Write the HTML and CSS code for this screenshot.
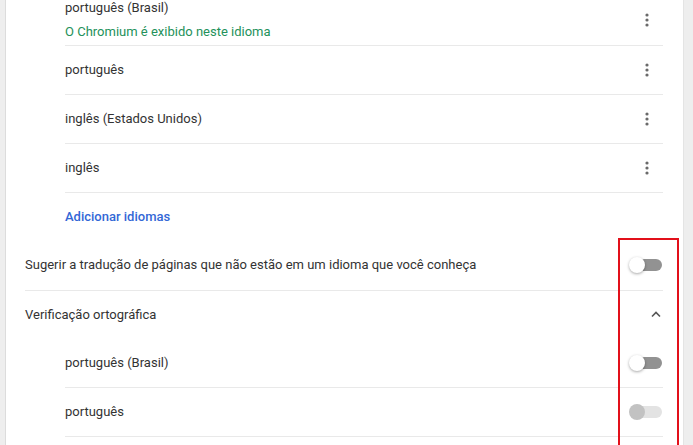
FILE: index.html
```html
<!DOCTYPE html>
<html lang="pt-BR">
<head>
<meta charset="utf-8">
<link rel="stylesheet" href="styles.css">
</head>
<body>
<div class="card">
  <div class="sublist">
    <div class="lang-row first">
      <div class="lang-text">
        <div class="lang-name">português (Brasil)</div>
        <div class="lang-note">O Chromium é exibido neste idioma</div>
      </div>
      <span class="kebab"><svg width="6" height="16" viewBox="0 0 6 16"><circle cx="3" cy="3" r="1.6"/><circle cx="3" cy="8" r="1.6"/><circle cx="3" cy="13" r="1.6"/></svg></span>
    </div>
    <div class="lang-row">
      <div class="lang-name">português</div>
      <span class="kebab"><svg width="6" height="16" viewBox="0 0 6 16"><circle cx="3" cy="3" r="1.6"/><circle cx="3" cy="8" r="1.6"/><circle cx="3" cy="13" r="1.6"/></svg></span>
    </div>
    <div class="lang-row">
      <div class="lang-name">inglês (Estados Unidos)</div>
      <span class="kebab"><svg width="6" height="16" viewBox="0 0 6 16"><circle cx="3" cy="3" r="1.6"/><circle cx="3" cy="8" r="1.6"/><circle cx="3" cy="13" r="1.6"/></svg></span>
    </div>
    <div class="lang-row">
      <div class="lang-name">inglês</div>
      <span class="kebab"><svg width="6" height="16" viewBox="0 0 6 16"><circle cx="3" cy="3" r="1.6"/><circle cx="3" cy="8" r="1.6"/><circle cx="3" cy="13" r="1.6"/></svg></span>
    </div>
    <div class="lang-row add">
      <a class="add-link">Adicionar idiomas</a>
    </div>
  </div>

  <div class="main-row">
    <div class="label">Sugerir a tradução de páginas que não estão em um idioma que você conheça</div>
    <span class="toggle"><span class="track"></span><span class="knob"></span></span>
  </div>

  <div class="main-row bordered">
    <div class="label">Verificação ortográfica</div>
    <span class="chevron"><svg width="10" height="7" viewBox="0 0 10 7"><path d="M1 5.5 L5 1.5 L9 5.5" fill="none" stroke="#555" stroke-width="1.6"/></svg></span>
  </div>

  <div class="sublist">
    <div class="lang-row nob">
      <div class="lang-name">português (Brasil)</div>
      <span class="toggle"><span class="track"></span><span class="knob"></span></span>
    </div>
    <div class="lang-row">
      <div class="lang-name">português</div>
      <span class="toggle disabled"><span class="track"></span><span class="knob"></span></span>
    </div>
    <div class="lang-row">
      <div class="lang-name"></div>
    </div>
  </div>
</div>
<div class="highlight"></div>
</body>
</html>
```

FILE: styles.css
```css
html, body {
  margin: 0;
  padding: 0;
}
body {
  background: #eeeeee;
  font-family: Roboto, "Liberation Sans", sans-serif;
  font-size: 13px;
  color: #333333;
  width: 693px;
  height: 445px;
  overflow: hidden;
  position: relative;
}
.card {
  margin: -12px 9px 0 5px;
  background: #ffffff;
  border-left: 1px solid #dcdcdc;
  border-right: 1px solid #e4e4e4;
  padding: 0 20px 0 19px;
}
.sublist {
  margin-left: 40px;
}
.lang-row {
  display: flex;
  align-items: center;
  justify-content: space-between;
  min-height: 49px;
  box-sizing: border-box;
  padding-bottom: 1px;
  border-top: 1px solid #e9e9e9;
}
.lang-row.first {
  border-top: none;
  padding: 10px 0 3px;
  min-height: 0;
}
.lang-row.nob {
  border-top: none;
  min-height: 48px;
}
.lang-name {
  line-height: 20px;
}
.lang-note {
  line-height: 20px;
  margin-top: 4px;
  color: #23915a;
}
.kebab {
  width: 32px;
  display: flex;
  justify-content: center;
  fill: #6a6a6a;
}
.add-link {
  color: #3367d6;
  font-weight: 500;
}
.main-row {
  display: flex;
  align-items: center;
  justify-content: space-between;
  min-height: 49px;
  box-sizing: border-box;
  padding-bottom: 1px;
}
.main-row.bordered {
  border-top: 1px solid #e9e9e9;
  min-height: 49px;
}
.label {
  line-height: 20px;
}
.chevron {
  width: 16px;
  display: flex;
  justify-content: center;
  margin-right: -1px;
}
.toggle {
  position: relative;
  width: 33px;
  height: 16px;
  display: flex;
  align-items: center;
  margin-right: 1px;
}
.toggle .track {
  margin-left: 4px;
  width: 29px;
  height: 12px;
  border-radius: 6px;
  background: #929292;
}
.toggle .knob {
  position: absolute;
  left: 0;
  top: 0;
  width: 16px;
  height: 16px;
  border-radius: 50%;
  background: #ffffff;
  box-shadow: 0 1px 3px rgba(0, 0, 0, 0.35);
}
.toggle.disabled .track {
  background: #e3e3e3;
}
.toggle.disabled .knob {
  background: #c2c2c2;
  box-shadow: none;
}
.highlight {
  position: absolute;
  left: 618px;
  top: 238px;
  width: 57px;
  height: 240px;
  border: 2px solid #e2101a;
}
```
